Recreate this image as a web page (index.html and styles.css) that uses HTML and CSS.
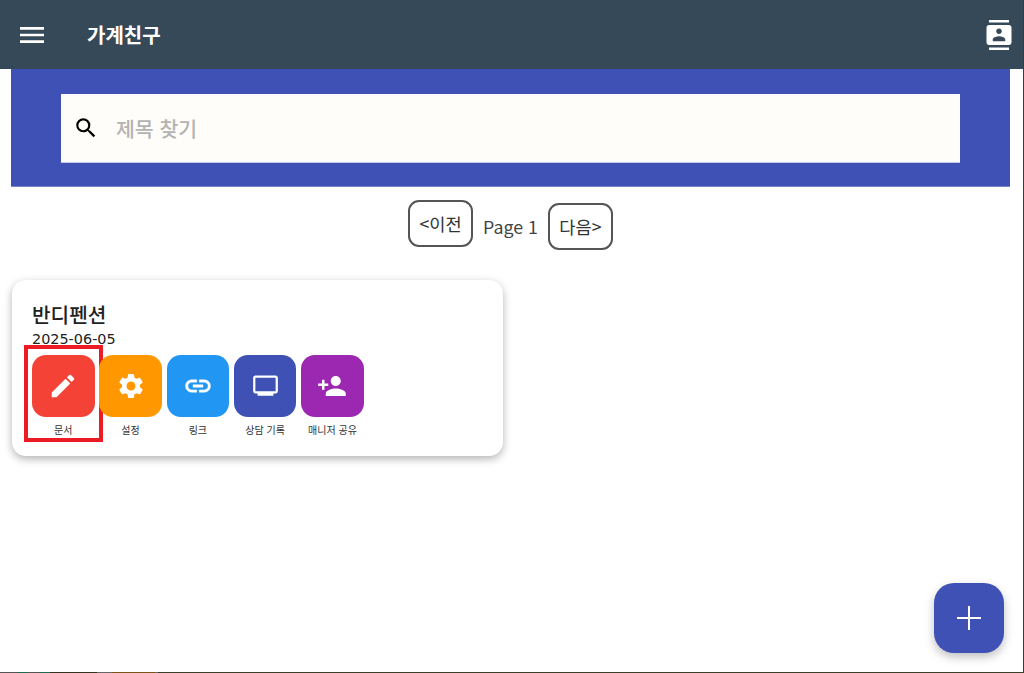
FILE: index.html
```html
<!DOCTYPE html>
<html lang="ko">

<head>
    <meta charset="UTF-8">
    <meta name="viewport" content="width=device-width, initial-scale=1.0">
    <title>가계친구</title>
    <link rel="stylesheet" href="styles.css">
</head>

<body>
    <div class="page">
        <header class="app-bar">
            <svg class="menu-icon" viewBox="0 0 24 24" fill="#fff">
                <path d="M3 18h18v-2H3v2zm0-5h18v-2H3v2zm0-7v2h18V6H3z" />
            </svg>
            <div class="app-title">가계친구</div>
            <svg class="contacts-icon" viewBox="0 0 24 24" fill="#fff">
                <path
                    d="M20 0H4v2h16V0zM4 24h16v-2H4v2zM20 4H4c-1.1 0-2 .9-2 2v12c0 1.1.9 2 2 2h16c1.1 0 2-.9 2-2V6c0-1.1-.9-2-2-2zm-8 2.75c1.24 0 2.25 1.01 2.25 2.25s-1.01 2.25-2.25 2.25S9.75 10.24 9.75 9 10.76 6.75 12 6.75zM17 17H7v-1.5c0-1.67 3.33-2.5 5-2.5s5 .83 5 2.5V17z" />
            </svg>
        </header>

        <section class="search-band">
            <div class="search-box">
                <svg class="search-icon" viewBox="0 0 24 24" fill="#000">
                    <path
                        d="M15.5 14h-.79l-.28-.27A6.471 6.471 0 0016 9.5 6.5 6.5 0 109.5 16c1.61 0 3.09-.59 4.23-1.57l.27.28v.79l5 4.99L20.49 19l-4.99-5zm-6 0C7.01 14 5 11.99 5 9.5S7.01 5 9.5 5 14 7.01 14 9.5 11.99 14 9.5 14z" />
                </svg>
                <span class="search-placeholder">제목 찾기</span>
            </div>
        </section>

        <nav class="pager">
            <button class="pager-btn pager-prev">&lt;이전</button>
            <span class="pager-label">Page 1</span>
            <button class="pager-btn pager-next">다음&gt;</button>
        </nav>

        <div class="card">
            <h2 class="card-title">반디펜션</h2>
            <div class="card-date">2025-06-05</div>
            <div class="actions">
                <div class="action action-selected">
                    <div class="action-tile red">
                        <svg viewBox="0 0 24 24" fill="#fff">
                            <path
                                d="M3 17.25V21h3.75L17.81 9.94l-3.75-3.75L3 17.25zM20.71 7.04a1 1 0 000-1.41l-2.34-2.34a1 1 0 00-1.41 0l-1.83 1.83 3.75 3.75 1.83-1.83z" />
                        </svg>
                    </div>
                    <span class="action-label">문서</span>
                </div>
                <div class="action">
                    <div class="action-tile orange">
                        <svg viewBox="0 0 24 24" fill="#fff">
                            <path
                                d="M19.14 12.94c.04-.3.06-.61.06-.94 0-.32-.02-.64-.07-.94l2.03-1.58a.49.49 0 00.12-.61l-1.92-3.32a.49.49 0 00-.59-.22l-2.39.96c-.5-.38-1.03-.7-1.62-.94l-.36-2.54a.48.48 0 00-.48-.41h-3.84c-.24 0-.43.17-.47.41l-.36 2.54c-.59.24-1.13.57-1.62.94l-2.39-.96c-.22-.08-.47 0-.59.22L2.74 8.87c-.12.21-.08.47.12.61l2.03 1.58c-.05.3-.09.63-.09.94s.02.64.07.94l-2.03 1.58a.49.49 0 00-.12.61l1.92 3.32c.12.22.37.29.59.22l2.39-.96c.5.38 1.03.7 1.62.94l.36 2.54c.05.24.24.41.48.41h3.84c.24 0 .44-.17.47-.41l.36-2.54c.59-.24 1.13-.56 1.62-.94l2.39.96c.22.08.47 0 .59-.22l1.92-3.32c.12-.22.07-.47-.12-.61l-2.01-1.58zM12 15.6c-1.98 0-3.6-1.62-3.6-3.6s1.62-3.6 3.6-3.6 3.6 1.62 3.6 3.6-1.62 3.6-3.6 3.6z" />
                        </svg>
                    </div>
                    <span class="action-label">설정</span>
                </div>
                <div class="action">
                    <div class="action-tile blue">
                        <svg viewBox="0 0 24 24" fill="#fff" stroke="#fff" stroke-width=".35">
                            <path
                                d="M3.9 12c0-1.71 1.39-3.1 3.1-3.1h4V7H7c-2.76 0-5 2.24-5 5s2.24 5 5 5h4v-1.9H7c-1.71 0-3.1-1.39-3.1-3.1zM8 13h8v-2H8v2zm9-6h-4v1.9h4c1.71 0 3.1 1.39 3.1 3.1s-1.39 3.1-3.1 3.1h-4V17h4c2.76 0 5-2.24 5-5s-2.24-5-5-5z" />
                        </svg>
                    </div>
                    <span class="action-label">링크</span>
                </div>
                <div class="action">
                    <div class="action-tile indigo">
                        <svg class="monitor-icon" viewBox="0 0 24 24" fill="#fff">
                            <path
                                d="M21 3H3c-1.1 0-2 .9-2 2v12c0 1.1.9 2 2 2h2v2h14v-2h2c1.1 0 2-.9 2-2V5c0-1.100-.9-2-2-2zm0 14H3V5h18v12z" />
                        </svg>
                    </div>
                    <span class="action-label">상담 기록</span>
                </div>
                <div class="action">
                    <div class="action-tile purple">
                        <svg viewBox="0 0 24 24" fill="#fff">
                            <path
                                d="M15 12c2.21 0 4-1.79 4-4s-1.79-4-4-4-4 1.79-4 4 1.79 4 4 4zm-9-2V7H4v3H1v2h3v3h2v-3h3v-2H6zm9 4c-2.67 0-8 1.34-8 4v2h16v-2c0-2.66-5.33-4-8-4z" />
                        </svg>
                    </div>
                    <span class="action-label">매니저 공유</span>
                </div>
            </div>
        </div>

        <button class="fab">
            <svg viewBox="0 0 24 24" fill="#fff">
                <path d="M11 0h2v11h11v2H13v11h-2V13H0v-2h11z" />
            </svg>
        </button>
    </div>
</body>

</html>
```
FILE: styles.css
```css
* {
    margin: 0;
    padding: 0;
    box-sizing: border-box;
    font-family: 'Noto Sans CJK KR', 'Noto Sans', sans-serif;
}

/* the last row of the window shows what is behind the page */
body {
    height: 673px;
    overflow: hidden;
    background: linear-gradient(to right,
            #555 0 17px, #1f6b4f 17px 27px, #555 27px 39px, #1f6b4f 39px 50px,
            #333320 50px 97px, #666 97px 112px, #7a5518 112px 155px, #666 155px 158px,
            #3a3f2a 158px);
}

.page {
    height: 672px;
    background-color: white;
    border-right: 1px solid #3a3f2a;
    overflow: hidden;
}

.app-bar {
    height: 69px;
    background-color: #364958;
    display: flex;
    align-items: center;
    padding: 0 9px 0 16px;
}

.menu-icon {
    width: 32px;
    height: 32px;
    margin-right: 39px;
}

.app-title {
    color: white;
    font-size: 20px;
    font-weight: 700;
    flex: 1;
}

.contacts-icon {
    width: 30px;
    height: 30px;
}

.search-band {
    margin: 0 13px 0 11px;
    height: 118px;
    padding: 25px 50px;
    background-color: #3f51b5;
    border-bottom: 1px solid #7986cb;
}

.search-box {
    height: 69px;
    background-color: #fffdf9;
    border-bottom: 1px solid #c5cae9;
    display: flex;
    align-items: center;
    padding-left: 12px;
}

.search-icon {
    width: 26px;
    height: 26px;
    margin-right: 17px;
}

.search-placeholder {
    color: #b3b3b3;
    font-size: 20.5px;
    font-weight: 500;
}

.pager {
    display: flex;
    justify-content: center;
    align-items: flex-start;
    padding-top: 13px;
    height: 93px;
    margin-left: -2px;
}

.pager-btn {
    width: 65px;
    height: 47px;
    background-color: white;
    border: 2px solid #555;
    border-radius: 11px;
    color: #333;
    font-size: 17.6px;
}

.pager-next {
    margin-top: 3px;
}

.pager-label {
    color: #444;
    font-size: 17.8px;
    margin: 13px 10px 0;
    line-height: 26px;
}

.card {
    width: 491px;
    height: 176px;
    margin-left: 12px;
    padding: 21px 20px 0;
    background-color: white;
    border-radius: 14px;
    box-shadow: 0 3px 9px rgba(0, 0, 0, 0.3);
}

.card-title {
    color: #222;
    font-size: 20.2px;
    font-weight: 500;
    line-height: 28px;
}

.card-date {
    color: #222;
    font-family: 'DejaVu Sans', sans-serif;
    font-size: 14.4px;
    line-height: 17px;
    margin-top: 2px;
}

.actions {
    display: flex;
    gap: 4.8px;
    margin-top: 6.5px;
}

.action {
    position: relative;
    width: 62.5px;
    display: flex;
    flex-direction: column;
    align-items: center;
}

.action-selected::after {
    content: "";
    position: absolute;
    left: -8px;
    top: -9.5px;
    width: 79px;
    height: 97px;
    box-sizing: border-box;
    border: 4px solid #ed1c24;
}

.action-tile {
    width: 62.5px;
    height: 62.5px;
    border-radius: 14px;
    display: flex;
    align-items: center;
    justify-content: center;
}

.action-tile svg {
    width: 30px;
    height: 30px;
}

.action-tile .monitor-icon {
    width: 27px;
    height: 27px;
}

.red {
    background-color: #f44336;
}

.orange {
    background-color: #ff9800;
}

.blue {
    background-color: #2196f3;
}

.indigo {
    background-color: #3f51b5;
}

.purple {
    background-color: #9c27b0;
}

.action-label {
    color: #333;
    font-size: 10px;
    line-height: 14px;
    margin-top: 6px;
    white-space: nowrap;
}

.fab {
    position: absolute;
    left: 934px;
    top: 583px;
    width: 70px;
    height: 70px;
    border: none;
    border-radius: 20px;
    background-color: #3f51b5;
    box-shadow: 0 4px 10px rgba(0, 0, 0, 0.25);
    display: flex;
    align-items: center;
    justify-content: center;
}

.fab svg {
    width: 24px;
    height: 24px;
}
```
